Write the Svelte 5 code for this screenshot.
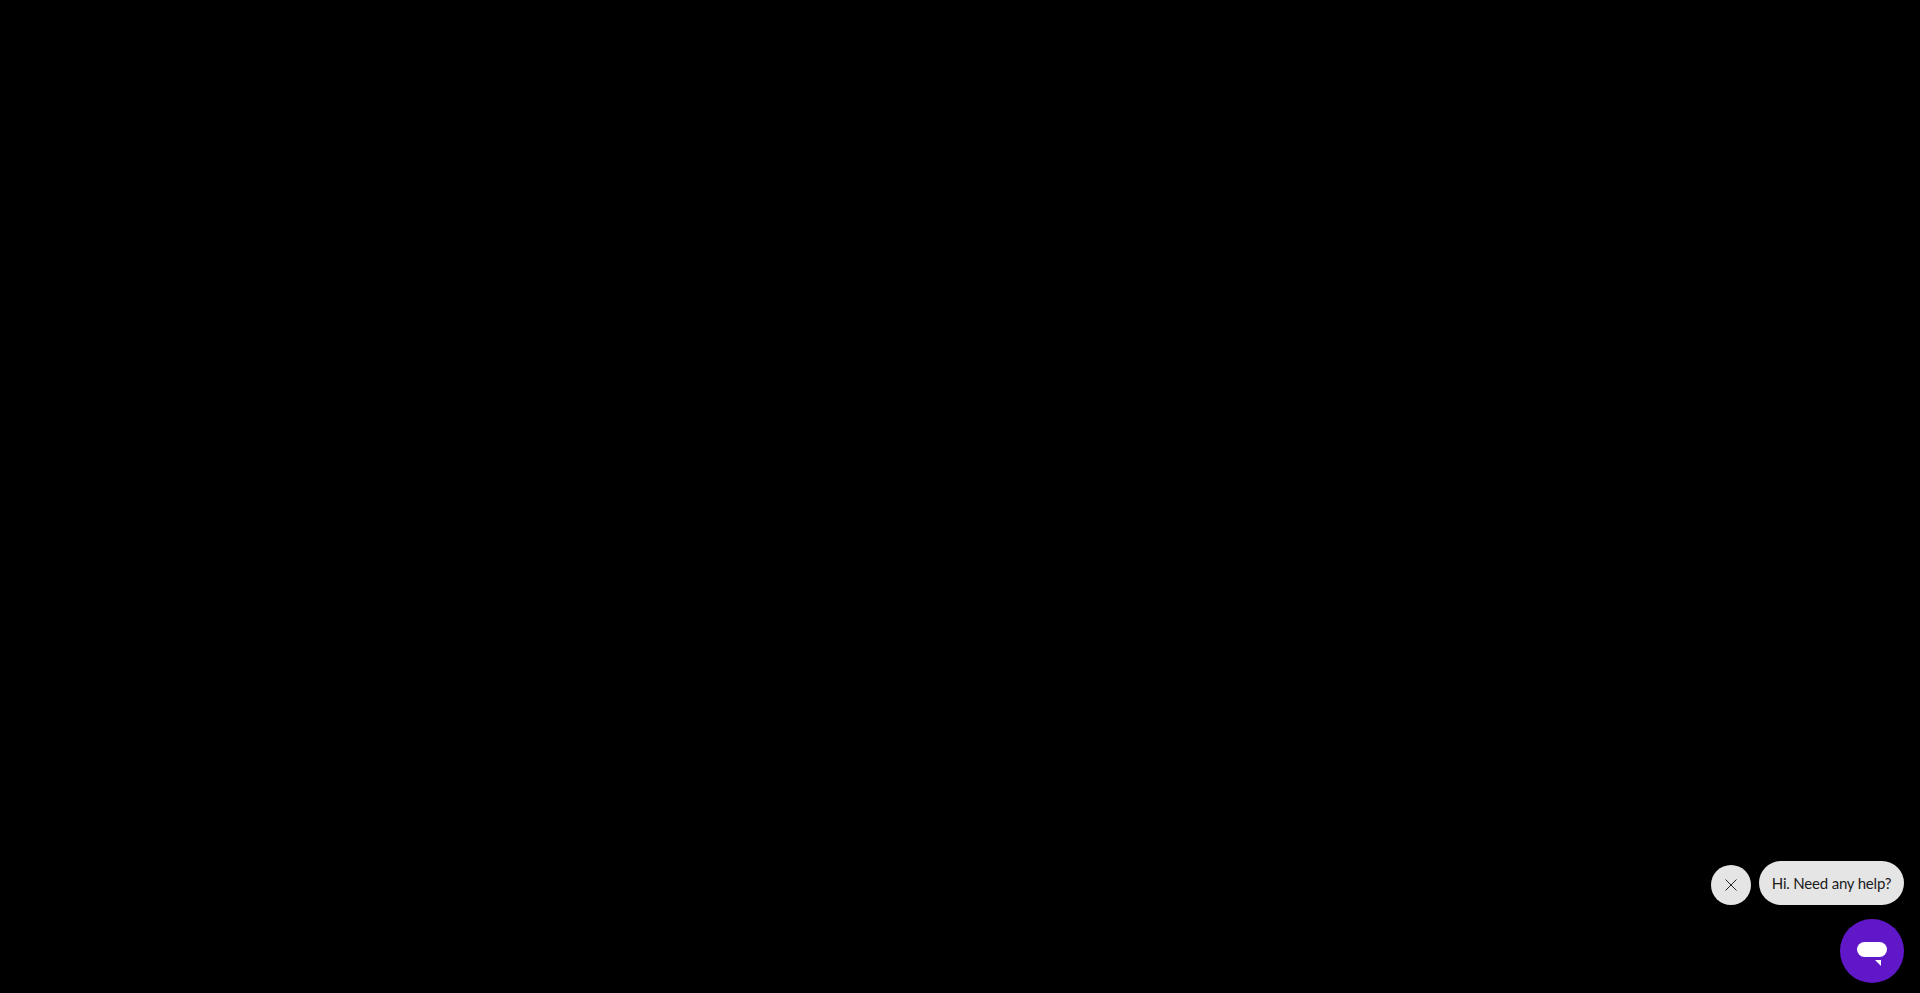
<script lang="ts">
	const greeting = 'Hi. Need any help?';
</script>

<main class="page">
	<div class="chat-widget">
		<div class="chat-prompt">
			<button class="chat-dismiss" aria-label="Dismiss">
				<svg width="14" height="14" viewBox="0 0 14 14" fill="none" aria-hidden="true">
					<path d="M1.5 1.5l11 11M12.5 1.5l-11 11" stroke="#222" stroke-width="1" />
				</svg>
			</button>
			<div class="chat-bubble">{greeting}</div>
		</div>
		<button class="chat-launcher" aria-label="Open chat">
			<svg width="30" height="24" viewBox="0 0 30 24" aria-hidden="true">
				<rect x="0" y="0" width="30" height="15" rx="7.5" fill="#fff" />
				<path d="M18 18h6v6z" fill="#fff" />
			</svg>
		</button>
	</div>
</main>

<style>
	:global(body) {
		margin: 0;
		background: #000;
	}
	.page {
		height: 993px;
		box-sizing: border-box;
		display: flex;
		flex-direction: column;
		justify-content: flex-end;
		align-items: flex-end;
		padding: 0 16px 10px 0;
		background: #000;
		overflow: hidden;
	}
	.chat-widget {
		display: flex;
		flex-direction: column;
		align-items: flex-end;
		gap: 14px;
	}
	.chat-prompt {
		display: flex;
		align-items: flex-end;
		gap: 8px;
	}
	.chat-dismiss {
		width: 40px;
		height: 40px;
		padding: 0;
		border: 0;
		border-radius: 50%;
		background: #e5e5e5;
		display: flex;
		align-items: center;
		justify-content: center;
	}
	.chat-bubble {
		width: 145px;
		height: 44px;
		box-sizing: border-box;
		padding: 0 12px;
		border-radius: 22px;
		background: #e5e5e5;
		color: #1c1c1c;
		font-family: Lato, 'Noto Sans', sans-serif;
		font-size: 15px;
		letter-spacing: -0.2px;
		line-height: 44px;
		text-align: center;
		white-space: nowrap;
	}
	.chat-launcher {
		width: 64px;
		height: 64px;
		padding: 0;
		border: 0;
		border-radius: 50%;
		background: #5f17c8;
		display: flex;
		align-items: center;
		justify-content: center;
	}
	.chat-launcher svg {
		margin-top: 6px;
	}
</style>
